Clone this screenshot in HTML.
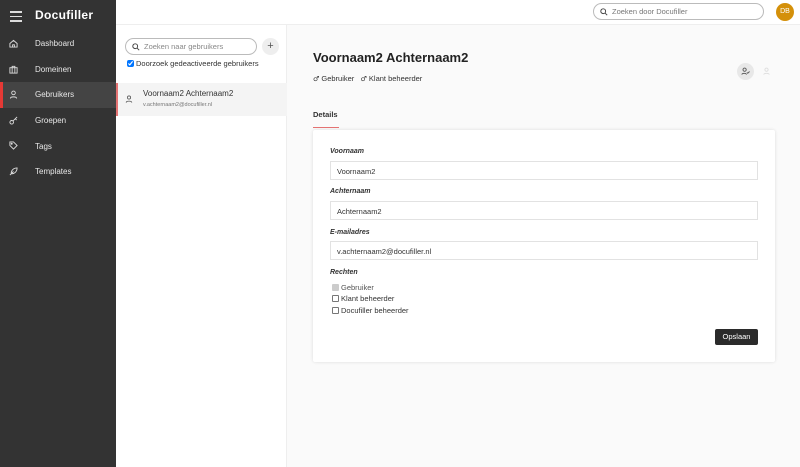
<!DOCTYPE html>
<html><head><meta charset="utf-8"><style>
*{box-sizing:border-box;margin:0;padding:0}
body{width:800px;height:467px;overflow:hidden;font-family:"Liberation Sans",sans-serif;background:#fafafa;position:relative;color:#333}
.side{position:absolute;left:0;top:0;width:116px;height:467px;background:#333;color:#eee}
.logo{position:absolute;left:35px;top:8px;font-size:12px;font-weight:600;color:#fff;letter-spacing:.3px}
.burger{position:absolute;left:10px;top:11px;width:12px}
.burger i{display:block;height:1.5px;background:#ddd;margin-bottom:3px}
.nav{position:absolute;top:31px;left:0;width:116px}
.nav div{height:25.6px;display:flex;align-items:center;font-size:8px;padding-left:35px;position:relative;color:#e8e8e8}
.nav div.act{background:#444}
.nav div.act:before{content:"";position:absolute;left:0;top:0;width:3px;height:100%;background:#e53935}
.nav svg{position:absolute;left:9px;top:8px}
.list{position:absolute;left:116px;top:0;width:171px;height:467px;background:#fff;border-right:1px solid #eee}
.top{position:absolute;left:116px;top:0;width:684px;height:25px;background:#fff;border-bottom:1px solid #eee}
.search{position:absolute;left:477px;top:3px;width:171px;height:17px;border:1px solid #bbb;border-radius:9px;font-size:7.5px;color:#777;padding:3px 0 0 18px}
.av{position:absolute;left:660px;top:3px;width:18px;height:18px;border-radius:50%;background:#d4900a;color:#fff;font-size:7px;text-align:center;line-height:18px}
.usearch{position:absolute;left:125px;top:38px;width:132px;height:17px;border:1px solid #bbb;border-radius:9px;font-size:7.5px;color:#888;padding:3px 0 0 18px}
.plus{position:absolute;left:262px;top:38px;width:17px;height:17px;border-radius:50%;background:#eee;text-align:center;font-size:11px;line-height:16px;color:#555}
.chk{position:absolute;left:127px;top:59px;font-size:7.5px;display:flex;align-items:center;gap:2px}
.chk input{width:7px;height:7px;margin:0}
.item{position:absolute;left:116px;top:83px;width:171px;height:33px;background:#f4f4f4}
.item:before{content:"";position:absolute;left:0;top:0;width:2px;height:100%;background:#e57373}
.item .n{position:absolute;left:27px;top:6px;font-size:8px}
.item .e{position:absolute;left:27px;top:19px;font-size:5.5px;color:#777}
h1{position:absolute;left:313px;top:50px;font-size:13px;font-weight:bold;color:#222}
.roles{position:absolute;left:313px;top:74px;font-size:7.5px;color:#333}
.roles b{font-family:"DejaVu Sans",sans-serif;font-weight:normal;font-size:7px}
.ib{position:absolute;top:63px;width:17px;height:17px;border-radius:50%}
.tab{position:absolute;left:313px;top:110px;font-size:7.5px;font-weight:bold}
.tabline{position:absolute;left:313px;top:127px;width:26px;height:1px;background:#e57373}
.card{position:absolute;left:313px;top:130px;width:462px;height:232px;background:#fff;box-shadow:0 0 3px rgba(0,0,0,.12);border-radius:2px}
.lbl{position:absolute;left:17px;font-size:7px;font-style:italic;font-weight:bold;color:#333}
.inp{position:absolute;left:17px;width:428px;height:19px;border:1px solid #e2e2e2;font-size:7.5px;padding:5px 0 0 6px;color:#333}
.cb{position:absolute;left:19px;font-size:7.5px;display:flex;align-items:center;gap:2px}
.cb span.b{width:7px;height:7px;border:1px solid #777;border-radius:1px;display:inline-block}
.btn{position:absolute;left:402px;top:199px;width:43px;height:16px;background:#2b2b2b;color:#fff;font-size:7.5px;text-align:center;line-height:16px;border-radius:2px}
</style></head><body>
<div class="side">
<div class="burger"><i></i><i></i><i></i></div>
<div class="logo">Docufiller</div>
<div class="nav">
<div><svg width="9" height="9" viewBox="0 0 10 10" fill="none" stroke="#ddd" stroke-width="1"><path d="M1 5L5 1.5 9 5V9H1Z M4 9V6.5h2V9"/></svg>Dashboard</div>
<div><svg width="9" height="9" viewBox="0 0 10 10" fill="none" stroke="#ddd" stroke-width="1"><rect x="1" y="3" width="8" height="6"/><path d="M3.5 3V1.5h3V3M3.5 3v6M6.5 3v6"/></svg>Domeinen</div>
<div class="act"><svg width="9" height="9" viewBox="0 0 10 10" fill="none" stroke="#ddd" stroke-width="1"><circle cx="5" cy="3.2" r="2"/><path d="M1.5 9.5c0-2.5 7-2.5 7 0"/></svg>Gebruikers</div>
<div><svg width="9" height="9" viewBox="0 0 10 10" fill="none" stroke="#ddd" stroke-width="1"><circle cx="3" cy="7" r="2"/><path d="M4.5 5.5L9 1M7 3l1.5 1.5"/></svg>Groepen</div>
<div><svg width="9" height="9" viewBox="0 0 10 10" fill="none" stroke="#ddd" stroke-width="1"><path d="M1 1h4l4 4-4 4-4-4Z"/><circle cx="3" cy="3" r=".6"/></svg>Tags</div>
<div><svg width="9" height="9" viewBox="0 0 10 10" fill="none" stroke="#ddd" stroke-width="1"><path d="M1 9L5 5M2.5 7.5C2 4 5 1 9 1 9 5 6 8 2.5 7.5Z"/></svg>Templates</div>
</div></div>
<div class="list"></div>
<div class="top">
<div class="search"><svg style="position:absolute;left:6px;top:4px" width="8" height="8" viewBox="0 0 10 10" fill="none" stroke="#444" stroke-width="1.2"><circle cx="4" cy="4" r="3"/><path d="M6.3 6.3L9 9"/></svg>Zoeken door Docufiller</div>
<div class="av">DB</div>
</div>
<div class="usearch"><svg style="position:absolute;left:6px;top:4px" width="8" height="8" viewBox="0 0 10 10" fill="none" stroke="#444" stroke-width="1.2"><circle cx="4" cy="4" r="3"/><path d="M6.3 6.3L9 9"/></svg>Zoeken naar gebruikers</div>
<div class="plus">+</div>
<div class="chk"><input type="checkbox" checked>Doorzoek gedeactiveerde gebruikers</div>
<div class="item"><svg style="position:absolute;left:9px;top:12px" width="8" height="8" viewBox="0 0 10 10" fill="none" stroke="#555" stroke-width="1"><circle cx="5" cy="3.2" r="2"/><path d="M1.5 9.5c0-2.5 7-2.5 7 0"/></svg><div class="n">Voornaam2 Achternaam2</div><div class="e">v.achternaam2@docufiller.nl</div></div>
<h1>Voornaam2 Achternaam2</h1>
<div class="roles"><b>♂</b> Gebruiker &nbsp; <b>♂</b> Klant beheerder</div>
<div class="ib" style="left:737px;background:#e8e8e8"><svg style="position:absolute;left:4px;top:4px" width="9" height="9" viewBox="0 0 10 10" fill="none" stroke="#555" stroke-width="1"><circle cx="4" cy="3" r="1.8"/><path d="M1 8.5c0-2 5-2 5 0M6.5 6l1 1 2-2"/></svg></div>
<div class="ib" style="left:758px;background:#fafafa"><svg style="position:absolute;left:4px;top:4px" width="9" height="9" viewBox="0 0 10 10" fill="none" stroke="#ddd" stroke-width="1"><circle cx="5" cy="3" r="1.8"/><path d="M2 8.5c0-2 6-2 6 0"/></svg></div>
<div class="tab">Details</div>
<div class="tabline"></div>
<div class="card">
<div class="lbl" style="top:18px">Voornaam</div>
<div class="inp" style="top:31px">Voornaam2</div>
<div class="lbl" style="top:58px">Achternaam</div>
<div class="inp" style="top:71px">Achternaam2</div>
<div class="lbl" style="top:99px">E-mailadres</div>
<div class="inp" style="top:111px">v.achternaam2@docufiller.nl</div>
<div class="lbl" style="top:139px">Rechten</div>
<div class="cb" style="top:153px"><span class="b" style="background:#ccc;border-color:#ccc"></span><span style="color:#555">Gebruiker</span></div>
<div class="cb" style="top:164px"><span class="b"></span>Klant beheerder</div>
<div class="cb" style="top:176px"><span class="b"></span>Docufiller beheerder</div>
<div class="btn">Opslaan</div>
</div>
</body></html>
